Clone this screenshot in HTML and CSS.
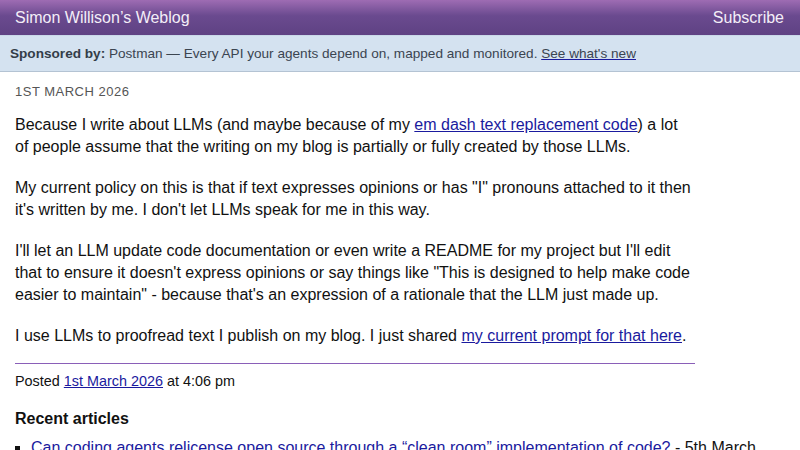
FILE: index.html
```html
<!DOCTYPE html>
<html lang="en">
<head>
  <meta charset="UTF-8">
  <title>Simon Willison’s Weblog</title>
  <link rel="stylesheet" href="styles.css">
</head>
<body>

  <div class="top-bar">
    <a class="site-title" href="#">Simon Willison’s Weblog</a>
    <a class="subscribe" href="#">Subscribe</a>
  </div>

  <div class="sponsor">
    <strong>Sponsored by:</strong> Postman — Every API your agents depend on, mapped and monitored. <a href="#">See what's new</a>
  </div>

  <div class="content">
    <div class="entry">
      <p class="date">1st March 2026</p>

      <p>Because I write about LLMs (and maybe because of my <a href="#">em dash text replacement code</a>) a lot of people assume that the writing on my blog is partially or fully created by those LLMs.</p>

      <p>My current policy on this is that if text expresses opinions or has "I" pronouns attached to it then it's written by me. I don't let LLMs speak for me in this way.</p>

      <p>I'll let an LLM update code documentation or even write a README for my project but I'll edit that to ensure it doesn't express opinions or say things like "This is designed to help make code easier to maintain" - because that's an expression of a rationale that the LLM just made up.</p>

      <p>I use LLMs to proofread text I publish on my blog. I just shared <a href="#">my current prompt for that here</a>.</p>
    </div>

    <p class="posted">Posted <a href="#">1st March 2026</a> at 4:06 pm</p>

    <div class="recent">
      <h3>Recent articles</h3>
      <ul>
        <li><a href="#">Can coding agents relicense open source through a “clean room” implementation of code?</a> - 5th March 2026</li>
        <li><a href="#">Something is afoot in the land of Qwen</a> - 4th March 2026</li>
      </ul>
    </div>
  </div>

</body>
</html>
```

FILE: styles.css
```css
body {
  margin: 0;
  font-family: "Liberation Sans", Arial, sans-serif;
  color: #111;
  background: #fff;
}

a {
  color: #1a1a9e;
}

.top-bar {
  display: flex;
  justify-content: space-between;
  align-items: center;
  height: 35px;
  padding: 0 16px 0 15px;
  background: linear-gradient(to bottom, #9e6cb3 0%, #6a4a8f 45%, #5f4283 100%);
  font-size: 16px;
}

.top-bar a {
  color: #f4eef8;
  text-decoration: none;
}

.sponsor {
  height: 35px;
  line-height: 35px;
  padding: 0 10px;
  background: #d4e2f0;
  border-top: 1px solid #c9d8e8;
  border-bottom: 1px solid #b4c3d3;
  font-size: 13.6px;
  color: #3b4550;
  white-space: nowrap;
}

.sponsor strong {
  color: #333d48;
}

.sponsor a {
  color: #3b4550;
  text-decoration-color: #1a1a9e;
}

.content {
  padding: 0 15px;
}

.entry {
  width: 680px;
  border-bottom: 1px solid #8a5fb8;
  padding-bottom: 16px;
}

.entry p {
  margin: 0 0 18px;
  font-size: 16px;
  line-height: 22.4px;
}

.entry p.date {
  margin: 12px 0 14px;
  font-size: 13px;
  line-height: 16px;
  letter-spacing: 0.5px;
  text-transform: uppercase;
  color: #555;
}

.entry p:last-child {
  margin-bottom: 0;
}

.posted {
  margin: 7px 0 0;
  font-size: 14.4px;
  line-height: 20px;
}

.recent h3 {
  margin: 18px 0 8px;
  font-size: 16px;
  line-height: 20px;
}

.recent ul {
  margin: 0;
  padding-left: 16px;
  list-style: square;
}

.recent li {
  font-size: 16px;
  line-height: 22px;
}
```
